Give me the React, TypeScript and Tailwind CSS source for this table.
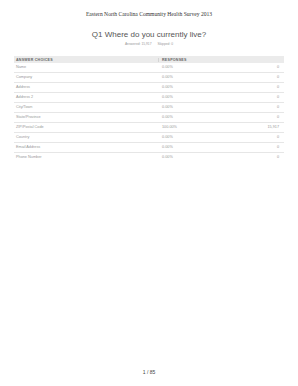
// Survey report page — Q1 response table
const rows: [string, string, string][] = [
  ['Name', '0.00%', '0'],
  ['Company', '0.00%', '0'],
  ['Address', '0.00%', '0'],
  ['Address 2', '0.00%', '0'],
  ['City/Town', '0.00%', '0'],
  ['State/Province', '0.00%', '0'],
  ['ZIP/Postal Code', '100.00%', '15,917'],
  ['Country', '0.00%', '0'],
  ['Email Address', '0.00%', '0'],
  ['Phone Number', '0.00%', '0'],
];

export default function App() {
  return (
    <div className="w-[298px] h-[386px] bg-white flex flex-col antialiased font-['Liberation_Sans',Arial,sans-serif]">
      <div className="pt-[11px] text-center font-['Liberation_Serif','Times_New_Roman',serif] text-[5.6px] leading-[6px] text-[#333]">
        Eastern North Carolina Community Health Survey 2013
      </div>

      <div className="mt-[13px] text-center text-[8px] leading-[9px] text-[#555]">
        Q1 Where do you currently live?
      </div>

      <div className="mt-[3px] flex justify-center gap-[6px] text-[3.3px] leading-[5px] text-[#999]">
        <span>Answered: 15,917</span>
        <span>Skipped: 0</span>
      </div>

      <div className="mt-[9px] mx-[14px]">
        <div className="flex items-center h-[7px] bg-[#ebebeb] text-[3.6px] font-bold tracking-[0.25px] text-[#666]">
          <div className="w-[145px] pl-[2px] border-r border-[#d4d4d4] h-[4px] leading-[4px]">ANSWER CHOICES</div>
          <div className="pl-[3px] leading-[4px]">RESPONSES</div>
        </div>
        {rows.map(([label, pct, count], i) => (
          <div
            key={label}
            className={`flex items-center h-[10px] text-[3.8px] text-[#999] ${
              i < rows.length - 1 ? 'border-b border-[#e6e6e6]' : ''
            }`}
          >
            <div className="w-[148px] pl-[2px]">{label}</div>
            <div className="flex-1">{pct}</div>
            <div className="pr-[5px]">{count}</div>
          </div>
        ))}
      </div>

      <div className="mt-auto pb-[11px] text-center text-[5px] leading-[6px] text-[#444]">
        1 / 85
      </div>
    </div>
  );
}
